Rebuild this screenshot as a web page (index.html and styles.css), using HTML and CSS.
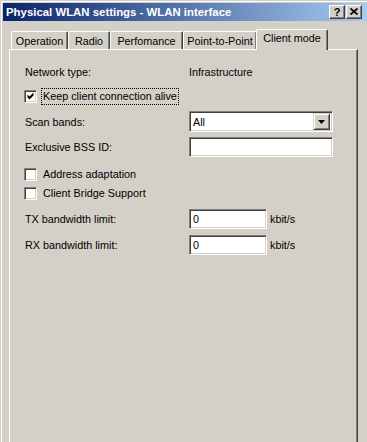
FILE: index.html
```html
<!DOCTYPE html>
<html>
<head>
<meta charset="utf-8">
<link rel="stylesheet" href="styles.css">
</head>
<body>
<div class="window">
  <div class="titlebar">
    <span class="title">Physical WLAN settings - WLAN interface</span>
    <div class="tbuttons">
      <div class="tbtn help">?</div>
      <div class="tbtn close"><svg width="8" height="7" viewBox="0 0 8 7"><path d="M0.5 0.5 L7.5 6.5 M7.5 0.5 L0.5 6.5" stroke="#000" stroke-width="1.7"/></svg></div>
    </div>
  </div>
  <div class="tabs">
    <div class="tab t-op">Operation</div>
    <div class="tab t-radio">Radio</div>
    <div class="tab t-perf">Perfomance</div>
    <div class="tab t-p2p">Point-to-Point</div>
    <div class="tab t-client active">Client mode</div>
  </div>
  <div class="panel">
    <div class="row r1">
      <span class="label">Network type:</span>
      <span class="value">Infrastructure</span>
    </div>
    <div class="row r2">
      <span class="cbox"><svg width="9" height="9" viewBox="0 0 9 9"><path d="M0.5 2.5 L2.5 4.5 L6.5 0.5 L6.5 3.5 L2.5 7.5 L0.5 5.5 Z" fill="#000"/></svg></span>
      <span class="cblabel focus">Keep client connection alive</span>
    </div>
    <div class="row r3">
      <span class="label">Scan bands:</span>
      <div class="select">
        <span class="seltext">All</span>
        <span class="dropbtn"><svg width="7" height="4" viewBox="0 0 7 4"><path d="M0 0 H7 L3.5 4 Z" fill="#000"/></svg></span>
      </div>
    </div>
    <div class="row r4">
      <span class="label">Exclusive BSS ID:</span>
      <div class="input wide"></div>
    </div>
    <div class="row r5">
      <span class="cbox"></span>
      <span class="cblabel">Address adaptation</span>
    </div>
    <div class="row r6">
      <span class="cbox"></span>
      <span class="cblabel">Client Bridge Support</span>
    </div>
    <div class="row r7">
      <span class="label">TX bandwidth limit:</span>
      <div class="input short">0</div>
      <span class="unit">kbit/s</span>
    </div>
    <div class="row r8">
      <span class="label">RX bandwidth limit:</span>
      <div class="input short">0</div>
      <span class="unit">kbit/s</span>
    </div>
  </div>
</div>
</body>
</html>
```

FILE: styles.css
```css
html, body {
  margin: 0;
  padding: 0;
  background: #d4d0c8;
  overflow: hidden;
  width: 367px;
  height: 442px;
}
body {
  font-family: "Liberation Sans", Arial, sans-serif;
  font-size: 10.8px;
  color: #000;
}
.window {
  box-sizing: border-box;
  margin: 1px 0 0 1px;
  border-top: 1px solid #fff;
  border-left: 1px solid #fff;
  padding: 1px 0 0 1px;
  width: 366px;
  height: 441px;
  overflow: hidden;
}
.titlebar {
  height: 18px;
  width: 364px;
  background: linear-gradient(to right, #0a246a, #a6caf0);
  display: flex;
  align-items: center;
  justify-content: space-between;
}
.title {
  color: #fff;
  font-weight: bold;
  font-size: 11.4px;
  padding-left: 3px;
  white-space: nowrap;
}
.tbuttons {
  display: flex;
  gap: 1px;
  margin-right: 5px;
}
.tbtn {
  width: 16px;
  height: 14px;
  box-sizing: border-box;
  background: #d4d0c8;
  border-top: 1px solid #fff;
  border-left: 1px solid #fff;
  border-right: 1px solid #404040;
  border-bottom: 1px solid #404040;
  box-shadow: inset -1px -1px 0 #808080;
  display: flex;
  align-items: center;
  justify-content: center;
}
.tbtn.help {
  font-weight: bold;
  font-size: 11px;
  line-height: 12px;
  padding-bottom: 1px;
}
.tbtn.close svg {
  display: block;
  margin-bottom: 1px;
}
.tabs {
  display: flex;
  align-items: flex-end;
  height: 20px;
  margin-top: 8px;
  padding-left: 8px;
  position: relative;
  z-index: 1;
}
.tab {
  box-sizing: border-box;
  height: 18px;
  border-top: 1px solid #fff;
  border-left: 1px solid #fff;
  border-right: 1px solid #404040;
  box-shadow: inset -1px 0 0 #808080;
  border-top-left-radius: 2px;
  border-top-right-radius: 2px;
  background: #d4d0c8;
  text-align: center;
  line-height: 16px;
  padding-top: 1px;
  white-space: nowrap;
}
.t-op { width: 57px; }
.t-radio { width: 42px; }
.t-perf { width: 73px; }
.t-p2p { width: 74px; }
.t-client { width: 72px; }
.tab.active {
  height: 21px;
  margin-left: -1px;
  margin-bottom: -1px;
  padding-top: 0;
  line-height: 16px;
  position: relative;
}
.panel {
  box-sizing: border-box;
  margin-left: 6px;
  width: 349px;
  height: 393px;
  border-top: 1px solid #fff;
  border-left: 1px solid #fff;
  border-right: 1px solid #404040;
  box-shadow: inset -1px 0 0 #808080;
  padding: 13px 0 0 15px;
  display: flex;
  flex-direction: column;
}
.row {
  display: flex;
  align-items: center;
}
.label {
  width: 164px;
  flex: none;
}
.r1 { height: 19px; }
.r2 { height: 18px; margin-top: 5px; }
.r3 { height: 21px; margin-top: 6px; }
.r4 { height: 20px; margin-top: 5px; }
.r5 { height: 18px; margin-top: 8px; }
.r6 { height: 18px; margin-top: 1px; }
.r7 { height: 20px; margin-top: 7px; }
.r8 { height: 20px; margin-top: 6px; }
.r1 .value { position: relative; top: -1px; }
.r1 .label { position: relative; top: -1px; }
.cbox {
  box-sizing: border-box;
  width: 13px;
  height: 13px;
  margin-left: -1px;
  background: #fff;
  border-top: 1px solid #808080;
  border-left: 1px solid #808080;
  border-right: 1px solid #fff;
  border-bottom: 1px solid #fff;
  box-shadow: inset 1px 1px 0 #404040, inset -1px -1px 0 #d4d0c8;
  display: flex;
  align-items: center;
  justify-content: center;
  flex: none;
}
.cbox svg { display: block; margin-left: 1px; }
.cblabel {
  margin-left: 4px;
  padding: 1px 1px;
  border: 1px solid transparent;
  line-height: 13px;
}
.cblabel.focus {
  border: 1px dotted #000;
}
.input, .select {
  box-sizing: border-box;
  height: 100%;
  background: #fff;
  border-top: 1px solid #808080;
  border-left: 1px solid #808080;
  border-right: 1px solid #fff;
  border-bottom: 1px solid #fff;
  box-shadow: inset 1px 1px 0 #404040, inset -1px -1px 0 #d4d0c8;
  padding-left: 3px;
  display: flex;
  align-items: center;
}
.input.wide { width: 144px; }
.input.short { width: 78px; }
.select {
  width: 144px;
  justify-content: space-between;
  padding-right: 2px;
}
.seltext { padding-left: 0; }
.dropbtn {
  box-sizing: border-box;
  width: 17px;
  height: 17px;
  background: #d4d0c8;
  border-top: 1px solid #d4d0c8;
  border-left: 1px solid #d4d0c8;
  border-right: 1px solid #404040;
  border-bottom: 1px solid #404040;
  box-shadow: inset 1px 1px 0 #fff, inset -1px -1px 0 #808080;
  display: flex;
  align-items: center;
  justify-content: center;
}
.dropbtn svg { display: block; }
.unit { margin-left: 3px; }
```
